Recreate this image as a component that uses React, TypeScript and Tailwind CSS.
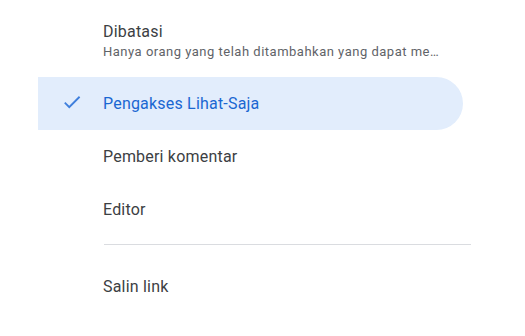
import { ReactNode } from "react";

function CheckIcon() {
  return (
    <svg viewBox="0 0 24 24" className="w-[22px] h-[22px] -mt-[3px] fill-[#3f7fdc]">
      <path d="M9 16.17L4.83 12l-1.42 1.41L9 19 21 7l-1.41-1.41z" />
    </svg>
  );
}

function MenuRow({ label, selected, icon }: { label: string; selected?: boolean; icon?: ReactNode }) {
  return (
    <div
      className={
        "flex items-center h-[53px] ml-[38px] mr-[62px] rounded-r-full " +
        (selected ? "bg-[#e2edfc] text-[#1a67d2]" : "text-[#3c4043]")
      }
    >
      <div className="w-[65px] pl-[23px] flex items-center">{icon}</div>
      <span className="text-[16px] tracking-[0.2px]">{label}</span>
    </div>
  );
}

export default function App() {
  return (
    <div className="w-[525px] h-[336px] bg-white overflow-hidden font-['Roboto','Liberation_Sans',sans-serif]">
      {/* Restricted item */}
      <div className="pl-[103px] pr-[62px] pt-[22px] h-[77px]">
        <div className="text-[16px] leading-[20px] tracking-[0.2px] text-[#3c4043]">Dibatasi</div>
        <div className="mt-[1px] text-[13px] leading-[18px] tracking-[0.5px] text-[#5f6368] whitespace-nowrap">
          Hanya orang yang telah ditambahkan yang dapat me…
        </div>
      </div>

      <MenuRow label="Pengakses Lihat-Saja" selected icon={<CheckIcon />} />
      <MenuRow label="Pemberi komentar" />
      <MenuRow label="Editor" />

      <div className="h-px bg-[#dadce0] ml-[104px] mr-[54px] mt-[8px] mb-[15px]" />

      <MenuRow label="Salin link" />
    </div>
  );
}
